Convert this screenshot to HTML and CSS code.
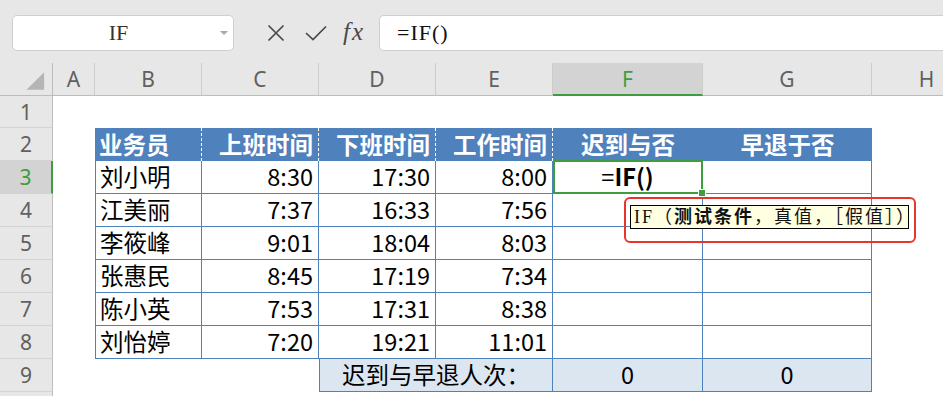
FILE: index.html
```html
<!DOCTYPE html>
<html lang="zh-CN">
<head>
<meta charset="UTF-8">
<meta name="viewport" content="width=device-width, initial-scale=1.0">
<title>IF函数 - 迟到早退</title>
<link rel="stylesheet" href="styles.css">
</head>
<body>

<div class="formula-bar">
    <div class="name-box">
        <span class="name">IF</span>
        <span class="drop"></span>
    </div>
    <div class="tools">
        <svg class="icon-x" width="18" height="18" viewBox="0 0 18 18"><path d="M1.5 1.5 L16.5 16.5 M16.5 1.5 L1.5 16.5"/></svg>
        <svg class="icon-ok" width="22" height="16" viewBox="0 0 22 16"><path d="M1 8 L8 14.5 L21 1.5"/></svg>
        <span class="fx">fx</span>
    </div>
    <div class="formula">=IF()</div>
</div>

<div class="sheet">
    <!-- column headers -->
    <div class="ch corner"><svg width="53" height="33" viewBox="0 0 53 33"><polygon points="45,9 45,27 27,27"/></svg></div>
    <div class="ch">A</div>
    <div class="ch">B</div>
    <div class="ch">C</div>
    <div class="ch">D</div>
    <div class="ch">E</div>
    <div class="ch sel">F</div>
    <div class="ch">G</div>
    <div class="ch">H</div>

    <!-- row 1 -->
    <div class="rh">1</div>
    <div class="rest"></div>

    <!-- row 2 -->
    <div class="rh">2</div>
    <div class="cell"></div>
    <div class="cell th left dash">业务员</div>
    <div class="cell th right dash">上班时间</div>
    <div class="cell th right dash">下班时间</div>
    <div class="cell th right dash">工作时间</div>
    <div class="cell th mid">迟到与否</div>
    <div class="cell th mid">早退于否</div>
    <div class="cell"></div>

    <!-- row 3 -->
    <div class="rh sel">3</div>
    <div class="cell"></div>
    <div class="cell tb first left">刘小明</div>
    <div class="cell tb right">8:30</div>
    <div class="cell tb right">17:30</div>
    <div class="cell tb right">8:00</div>
    <div class="cell tb mid active">=<b>IF()</b></div>
    <div class="cell tb"></div>
    <div class="cell"></div>

    <!-- row 4 -->
    <div class="rh">4</div>
    <div class="cell"></div>
    <div class="cell tb first left">江美丽</div>
    <div class="cell tb right">7:37</div>
    <div class="cell tb right">16:33</div>
    <div class="cell tb right">7:56</div>
    <div class="cell tb"></div>
    <div class="cell tb"></div>
    <div class="cell"></div>

    <!-- row 5 -->
    <div class="rh">5</div>
    <div class="cell"></div>
    <div class="cell tb first left">李筱峰</div>
    <div class="cell tb right">9:01</div>
    <div class="cell tb right">18:04</div>
    <div class="cell tb right">8:03</div>
    <div class="cell tb"></div>
    <div class="cell tb"></div>
    <div class="cell"></div>

    <!-- row 6 -->
    <div class="rh">6</div>
    <div class="cell"></div>
    <div class="cell tb first left">张惠民</div>
    <div class="cell tb right">8:45</div>
    <div class="cell tb right">17:19</div>
    <div class="cell tb right">7:34</div>
    <div class="cell tb"></div>
    <div class="cell tb"></div>
    <div class="cell"></div>

    <!-- row 7 -->
    <div class="rh">7</div>
    <div class="cell"></div>
    <div class="cell tb first left">陈小英</div>
    <div class="cell tb right">7:53</div>
    <div class="cell tb right">17:31</div>
    <div class="cell tb right">8:38</div>
    <div class="cell tb"></div>
    <div class="cell tb"></div>
    <div class="cell"></div>

    <!-- row 8 -->
    <div class="rh">8</div>
    <div class="cell"></div>
    <div class="cell tb first left">刘怡婷</div>
    <div class="cell tb right">7:20</div>
    <div class="cell tb right">19:21</div>
    <div class="cell tb right">11:01</div>
    <div class="cell tb"></div>
    <div class="cell tb"></div>
    <div class="cell"></div>

    <!-- row 9 -->
    <div class="rh">9</div>
    <div class="cell span3"></div>
    <div class="cell tb first sum mid span2">迟到与早退人次：</div>
    <div class="cell tb sum mid">0</div>
    <div class="cell tb sum mid">0</div>
    <div class="cell"></div>

    <!-- row 10, only its top edge shows -->
    <div class="rh"></div>
    <div class="rest"></div>

    <!-- function hint -->
    <div class="hint-mark">
        <div class="hint">IF（<b>测试条件</b>，真值，［假值］）</div>
    </div>
</div>

</body>
</html>
```

FILE: styles.css
```css
* {
    box-sizing: border-box;
}

body {
    margin: 0;
    width: 943px;
    height: 396px;
    overflow: hidden;
    background-color: #fff;
    font-family: "Noto Sans CJK SC", sans-serif;
}

/* formula bar */
.formula-bar {
    height: 63px;
    background-color: #e7e7e7;
    display: flex;
    align-items: flex-start;
    padding: 15px 0 0 12px;
    width: 990px;
}

.name-box {
    width: 222px;
    height: 36px;
    background-color: #fff;
    border: 1px solid #cfcfcf;
    border-radius: 5px;
    display: flex;
    align-items: center;
}

.name-box .name {
    flex: 1;
    text-align: center;
    font: 22px "Liberation Serif", serif;
    color: #333;
    padding-left: 4px;
}

.drop {
    width: 0;
    height: 0;
    border-left: 4px solid transparent;
    border-right: 4px solid transparent;
    border-top: 4px solid #a8a8a8;
    margin-right: 5px;
}

.tools {
    height: 36px;
    display: flex;
    align-items: center;
    margin-left: 33px;
}

.tools svg path {
    fill: none;
    stroke: #4a4a4a;
    stroke-width: 1.7;
}

.icon-ok {
    margin-left: 20px;
}

.fx {
    margin-left: 16px;
    width: 24px;
    font: italic 25px "Liberation Serif", serif;
    letter-spacing: 2px;
    color: #4a4a4a;
    margin-top: -3px;
}

.formula {
    flex: 1;
    margin-left: 12px;
    height: 36px;
    background-color: #fff;
    border: 1px solid #cfcfcf;
    border-right: none;
    border-radius: 5px 0 0 5px;
    padding-left: 17px;
    font: 22px/34px "Liberation Serif", serif;
    color: #111;
    letter-spacing: 1px;
}

/* sheet */
.sheet {
    position: relative;
    display: grid;
    grid-template-columns: 53px 42px 107px 117px 117px 117px 150px 169px 110px;
    grid-template-rows: 33px 32px repeat(9, 33px);
    width: 982px;
}

.ch {
    background-color: #e7e7e7;
    border-right: 1px solid #cccccc;
    border-bottom: 1px solid #bdbdbd;
    display: flex;
    align-items: center;
    justify-content: center;
    font: 21px "Noto Sans", sans-serif;
    color: #606060;
}

.ch.corner {
    border-right-color: #bdbdbd;
}

.corner polygon {
    fill: #b5b5b5;
}

.ch.sel {
    background-color: #d3d3d3;
    color: #3e9e3e;
    border-bottom: 2px solid #3e9e3e;
}

.rh {
    background-color: #e7e7e7;
    border-right: 1px solid #bdbdbd;
    border-bottom: 1px solid #d3d3d3;
    display: flex;
    align-items: center;
    justify-content: center;
    font: 21px "Noto Sans", sans-serif;
    color: #606060;
}

.rh.sel {
    background-color: #d3d3d3;
    color: #3e9e3e;
    border-right: 2px solid #3e9e3e;
}

.rest {
    grid-column: 2 / -1;
}

.span3 {
    grid-column: span 3;
}

.span2 {
    grid-column: span 2;
}

.cell {
    display: flex;
    align-items: center;
    font-size: 23.5px;
    line-height: 1;
    color: #000;
    white-space: nowrap;
}

.left {
    justify-content: flex-start;
    padding-left: 4px;
}

.right {
    justify-content: flex-end;
    padding-right: 5px;
}

.mid {
    justify-content: center;
}

.th {
    background-color: #4f81bd;
    color: #fff;
    font-weight: bold;
}

.th.dash {
    border-right: 1px dashed #fff;
}

.tb {
    border-right: 1px solid #4f81bd;
    border-bottom: 1px solid #4f81bd;
}

.tb.first {
    border-left: 1px solid #4f81bd;
}

.sum {
    background-color: #dce6f1;
}

.active {
    position: relative;
}

.active b {
    font-weight: bold;
}

.active::before {
    content: "";
    position: absolute;
    left: 0;
    top: -1px;
    right: -1px;
    bottom: -1px;
    border: 2px solid #3e9e3e;
}

.active::after {
    content: "";
    position: absolute;
    right: -4px;
    bottom: -4px;
    width: 6px;
    height: 6px;
    background-color: #3e9e3e;
    border: 1px solid #fff;
}

/* tooltip + red mark */
.hint-mark {
    position: absolute;
    left: 624px;
    top: 134px;
    width: 292px;
    height: 46px;
    border: 2px solid #e8352b;
    border-radius: 6px;
    padding: 6px 0 0 4px;
}

.hint {
    width: 279px;
    height: 24px;
    background-color: #ffffe1;
    border: 1px solid #000;
    padding-left: 3px;
    font: 18px/22px "Liberation Serif", "Noto Sans CJK SC", serif;
    letter-spacing: 2px;
    color: #111;
    white-space: nowrap;
}

.hint b {
    font-weight: bold;
}
```
